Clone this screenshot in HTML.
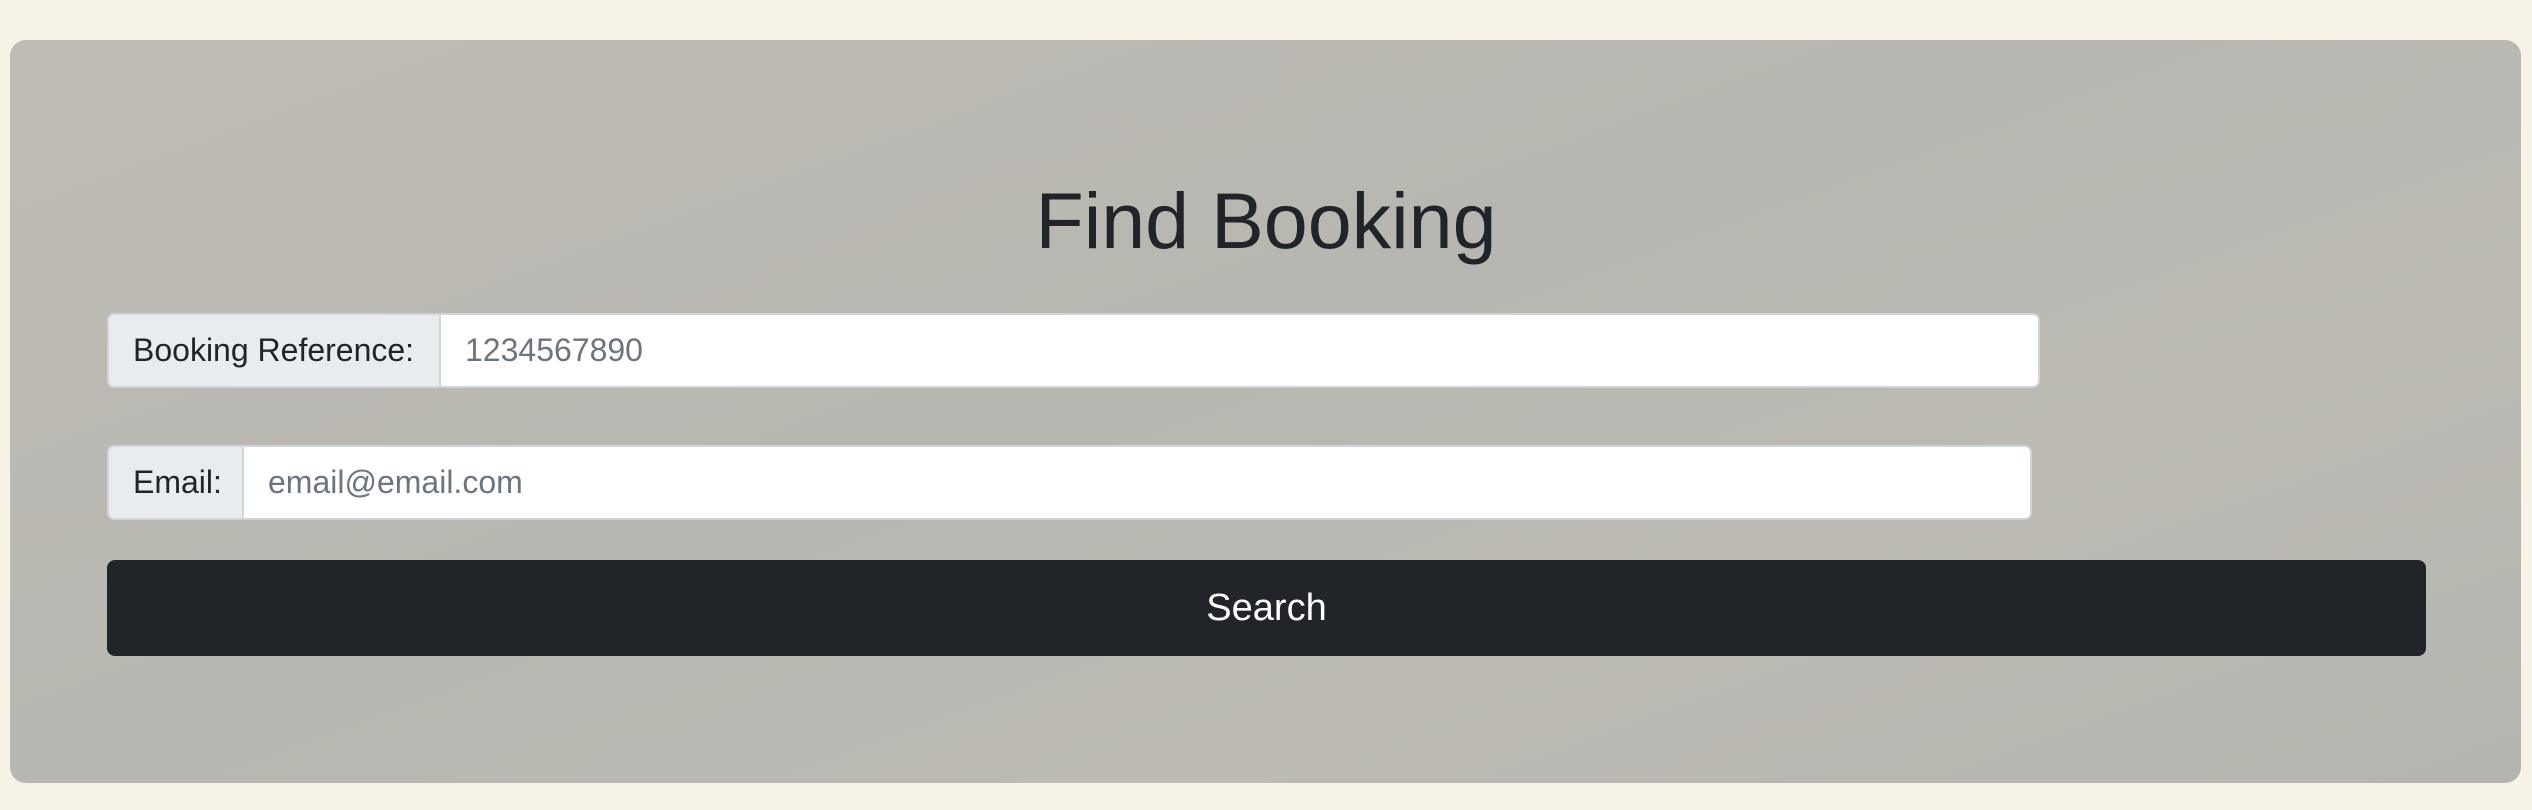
<!DOCTYPE html>
<html><head><style>
html,body{margin:0;padding:0;width:2532px;height:810px;overflow:hidden;background:#f6f2e6;font-family:"Liberation Sans",sans-serif;}
.card{position:absolute;left:10px;top:40px;width:2511px;height:743px;border-radius:16px;background:linear-gradient(160deg,#bfbcb4 0%,#b7b6b0 45%,#bcbab3 70%,#b5b4ae 100%);}
h1{position:absolute;left:0;width:2532px;top:176px;margin:0;text-align:center;font-weight:400;font-size:79px;line-height:90px;color:#212529;}
.grp{position:absolute;left:107px;height:75px;display:flex;border:2px solid #ced4da;border-radius:7px;box-sizing:border-box;overflow:hidden;background:#fff;}
.lab{background:#e9ecef;border-right:2px solid #ced4da;color:#212529;font-size:32px;display:flex;align-items:center;padding:0 24px;box-sizing:border-box;}
.ph{color:#6c757d;font-size:32px;display:flex;align-items:center;padding-left:24px;}
.btn{position:absolute;left:107px;top:560px;width:2319px;height:96px;background:#212529;border-radius:8px;color:#fff;font-size:38px;display:flex;align-items:center;justify-content:center;}
</style></head><body>
<div class="card"></div>
<h1>Find Booking</h1>
<div class="grp" style="top:313px;width:1933px"><div class="lab" style="width:332px">Booking Reference:</div><div class="ph">1234567890</div></div>
<div class="grp" style="top:445px;width:1925px"><div class="lab" style="width:135px">Email:</div><div class="ph">email@email.com</div></div>
<div class="btn">Search</div>
</body></html>
